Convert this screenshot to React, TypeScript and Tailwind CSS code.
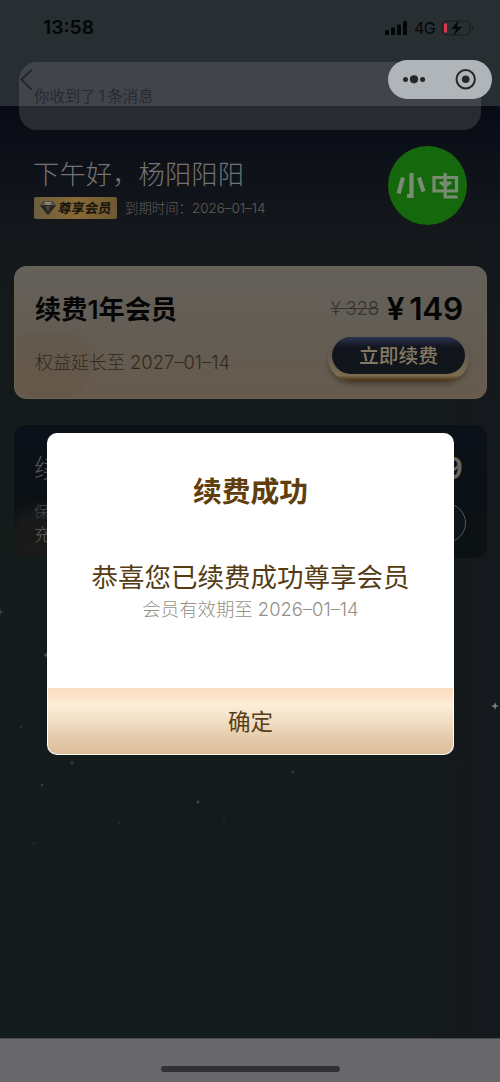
import React from "react";

const stars = [
  { x: 495, y: 706, size: 7, color: "#7f8184" },
  { x: 72, y: 763, size: 6, color: "#2a3232" },
  { x: 46, y: 655, size: 4, color: "#4a5050" },
  { x: 0, y: 612, size: 8, color: "#3a4040" },
  { x: 42, y: 785, size: 2, color: "#363e3e" },
  { x: 21, y: 727, size: 2, color: "#262e2e" },
  { x: 293, y: 772, size: 2, color: "#343c3c" },
  { x: 198, y: 802, size: 2, color: "#434a4a" },
  { x: 119, y: 823, size: 3, color: "#1f2626" },
  { x: 224, y: 821, size: 3, color: "#1f2626" },
  { x: 34, y: 843, size: 3, color: "#1f2626" },
];

const Stars = () => {
  return <svg className="absolute inset-0" width="500" height="1082" aria-hidden="true">
      {stars.map(s => <path key={`${s.x}-${s.y}`} fill={s.color} d={`M${s.x} ${s.y - s.size / 2 - 0.5}l1 ${s.size / 2 - 0.5}l${s.size / 2 - 0.5} 1l${-(s.size / 2 - 0.5)} 1l-1 ${s.size / 2 - 0.5}l-1 ${-(s.size / 2 - 0.5)}l${-(s.size / 2 - 0.5)} -1l${s.size / 2 - 0.5} -1z`} />)}
    </svg>;
};

const StatusBar = () => {
  return <div className="flex h-[55px] items-center justify-between pl-[43px] pr-[25px] text-[#040608]">
      <span className="text-[19.3px] font-semibold leading-none">13:58</span>
      <div className="flex items-center">
        <svg width="23" height="14" viewBox="0 0 23 14" fill="currentColor">
          <rect x="1" y="9" width="4" height="5" rx="1" />
          <rect x="7" y="6.5" width="4" height="7.5" rx="1" />
          <rect x="13" y="3.5" width="4" height="10.5" rx="1" />
          <rect x="19" y="0" width="4" height="14" rx="1" />
        </svg>
        <span className="ml-[7px] w-[21px] text-[16px] leading-none tracking-[-0.5px]">4G</span>
        <svg className="ml-[6px]" width="34" height="16" viewBox="0 0 34 16">
          <rect x="1.5" y="1.2" width="27.5" height="13.6" rx="4" fill="none" stroke="#1a2023" strokeWidth="1.2" />
          <path d="M31 5.5c1.6.6 1.6 4.4 0 5z" fill="#1a2023" />
          <rect x="3" y="3.2" width="3" height="9.6" rx="1.3" fill="#d23a52" />
          <path d="M18 .3 10 9h5l-2.5 6.8L21 6.8h-5.2z" fill="currentColor" />
        </svg>
      </div>
    </div>;
};

const Capsule = () => {
  return <div className="absolute left-[388px] top-[60px] h-[39px] w-[104px] rounded-full bg-[#b0b5b9]">
      <svg width="104" height="39" viewBox="0 0 104 39" fill="#24282b">
        <circle cx="17.5" cy="19.6" r="2.5" />
        <circle cx="26" cy="19.3" r="4.1" />
        <circle cx="34.6" cy="19.6" r="2.5" />
        <circle cx="77.7" cy="19.3" r="9.2" fill="none" stroke="#24282b" strokeWidth="2" />
        <circle cx="77.7" cy="19.3" r="3.8" />
      </svg>
    </div>;
};

const Diamond = () => {
  return <svg width="16" height="14" viewBox="0 0 16 14">
      <path d="M4 0h8l4 4.5-8 9.5-8-9.5z" fill="#25221c" />
      <path d="M4 .5h8L11 4H5z" fill="#86837b" />
      <path d="M4 .5.5 4.5H5zM12 .5l3.5 4H11z" fill="#55524b" />
      <path d="M5 5h6l-3 6z" fill="#4a463d" />
    </svg>;
};

const Profile = () => {
  return <section className="flex h-[160px] justify-between pl-[33px] pr-[33px]">
      <div className="pt-[50px]">
        <h1 className="text-[26.4px] font-light leading-[37px] text-[#757374]">下午好，杨阳阳阳</h1>
        <div className="ml-px mt-[4px] flex items-center">
          <span className="flex h-[22px] w-[83px] items-center gap-[2px] rounded-[2px] bg-gradient-to-r from-[#6d5c3e] via-[#866b35] to-[#6f5833] pl-[6px]">
            <Diamond />
            <span className="mt-px skew-x-[-8deg] whitespace-nowrap text-[13.4px] font-bold leading-none text-[#17130d]">尊享会员</span>
          </span>
          <span className="ml-[8px] mt-[2px] whitespace-nowrap text-[13.4px] font-light leading-none text-[#605d59]">到期时间：2026–01–14</span>
        </div>
      </div>
      <div className="relative mt-[40px] size-[79px] rounded-full bg-[#15680c]">
        <svg className="absolute left-[7px] top-[25px]" width="66" height="30" viewBox="0 0 66 30" fill="none" stroke="#798c73" strokeWidth="4.2">
          <path d="M16.5 2v23h-4.5M8 6.5 3.5 22.500M24 6.500l4.500 14" />
          <path d="M39 6.500h22.500v13.500H39zM50.200 2V26h12.300M44.500 12h12M46.800 14.500l3.400-3.400 3.400 3.400" strokeWidth="3.2" />
        </svg>
      </div>
    </section>;
};

const RenewCard = () => {
  return <section className="relative mx-[14px] mr-[13px] flex h-[133px] justify-between overflow-hidden rounded-[12px] border border-[#6a6356] bg-gradient-to-b from-[#64615a] via-[#635d54] to-[#675b4d] px-[20px]">
      <div className="absolute -left-[8px] top-[64px] h-[68px] w-[84px] rounded-full bg-[#634f40]/30 blur-[2px]" />
      <div className="relative">
        <h2 className="mt-[25px] text-[26.2px] font-bold leading-[36px] text-[#050505]">续费<span className="font-semibold">1</span>年会员</h2>
        <p className="mt-[20px] whitespace-nowrap text-[18px] font-light leading-[28px] text-[#31281c]">权益延长至 <span className="text-[18.4px]">2027–01–14</span></p>
      </div>
      <div className="relative mr-[-3px] flex w-[141px] flex-col items-end">
        <div className="mt-[24px] mr-[6px] flex h-[36px] items-center gap-[8px] whitespace-nowrap">
          <del className="text-[18.5px] font-light tracking-[-0.2px] text-[#37342f]">¥ 328</del>
          <span className="text-[31.5px] font-semibold tracking-[-0.2px] [word-spacing:-3px] text-[#050505]">¥ 149</span>
        </div>
        <div className="mt-[8px] h-[46px] w-[141px] rounded-full bg-gradient-to-b from-[#625b52] from-40% via-[#7c6b4f] via-88% to-[#45300f] px-[4px] pt-[2px] shadow-[0_4px_5px_-1px_rgba(35,25,15,0.45)]">
          <button className="block h-[37px] w-[133px] rounded-full bg-gradient-to-b from-[#2c334f] via-[#12151d] via-28% to-[#10161a] text-[19.8px] font-medium leading-[36px] text-[#857963]">立即续费</button>
        </div>
      </div>
    </section>;
};

const SecondCard = () => {
  return <section className="relative ml-[14px] mr-[13px] mt-[26px] flex h-[133px] justify-between overflow-hidden rounded-[12px] bg-gradient-to-b from-[#0a1119] via-[#0b1015] to-[#0c1113] pl-[20px] pr-[21px]">
      <div className="absolute -left-[6px] top-[82px] h-[60px] w-[80px] rounded-full bg-[#201e1c]/70 blur-[6px]" />
      <div className="relative">
        <h2 className="mt-[26px] text-[26px] font-light leading-[36px] text-[#555656]">续</h2>
        <p className="mt-[13px] text-[15px] font-light leading-[23px] text-[#45494a]">保</p>
        <p className="text-[17px] font-light leading-[25px] text-[#606160]">充</p>
      </div>
      <div className="relative flex flex-col items-end">
        <span className="mt-[25px] mr-[3px] text-[30px] font-semibold leading-[36px] text-[#68665d]">9</span>
        <span className="mt-[17px] h-[40px] w-[133px] rounded-full border border-[#55585a] bg-[#10151a]" />
      </div>
    </section>;
};

const SuccessDialog = () => {
  return <div role="dialog" className="absolute left-[47px] top-[433px] flex h-[322px] w-[407px] flex-col overflow-hidden rounded-[10px] bg-white text-center">
      <h3 className="mt-[39px] text-[28.8px] font-bold leading-[40px] text-[#5f3e0c]">续费成功</h3>
      <p className="mt-[46px] whitespace-nowrap text-[26.5px] leading-[38px] text-[#553c13]">恭喜您已续费成功尊享会员</p>
      <p className="whitespace-nowrap text-[18.4px] font-light leading-[26px] text-[#929087]">会员有效期至 2026–01–14</p>
      <button className="mx-px mt-auto mb-px h-[66px] rounded-b-[9px] bg-[linear-gradient(#fbdcc0_0%,#fbe2c8_12%,#fdedd7_25%,#f1dfc5_50%,#e6cdae_72%,#dcbd99_100%)] pt-[2px] text-[22.5px] text-[#573d18]">确定</button>
    </div>;
};

const App = () => {
  return <div className="relative flex h-[1082px] w-[500px] flex-col overflow-hidden bg-[#141b1b] bg-[linear-gradient(to_right,transparent_85%,#15181c_95%)] font-[Inter,'Noto_Sans_CJK_SC',sans-serif]">
      <div className="absolute inset-x-0 top-[106px] h-[310px] bg-gradient-to-b from-[#080b15] via-[#14181c] via-40% to-transparent" />
      <Stars />
      <header className="relative h-[106px] bg-[#282f32]">
        <StatusBar />
      </header>
      {/* Incoming message banner */}
      <div className="absolute left-[19px] top-[62px] h-[68px] w-[462px] overflow-hidden rounded-[18px] bg-[#292b30]">
        <div className="h-[44px] bg-[#41444b] pl-[15px] pt-[23px] text-[15.4px] leading-[24px] text-[#262a34] [word-spacing:-1.500px]">你收到了 1 条消息</div>
      </div>
      <svg className="absolute left-[20px] top-[69px]" width="13" height="22" fill="none" stroke="#1c2124" strokeWidth="1.6">
        <path d="M11.5 1 1.5 10.5l10 10" />
      </svg>
      <Capsule />
      <main className="relative flex-1">
        <Profile />
        <RenewCard />
        <SecondCard />
      </main>
      <footer className="relative flex h-[44px] items-end justify-center border-t border-[#4c4b4d] bg-[#68676a] pb-[10px]">
        <div className="h-[6px] w-[179px] rounded-full bg-[#313133]" />
      </footer>
      <SuccessDialog />
    </div>;
};
export default App;
